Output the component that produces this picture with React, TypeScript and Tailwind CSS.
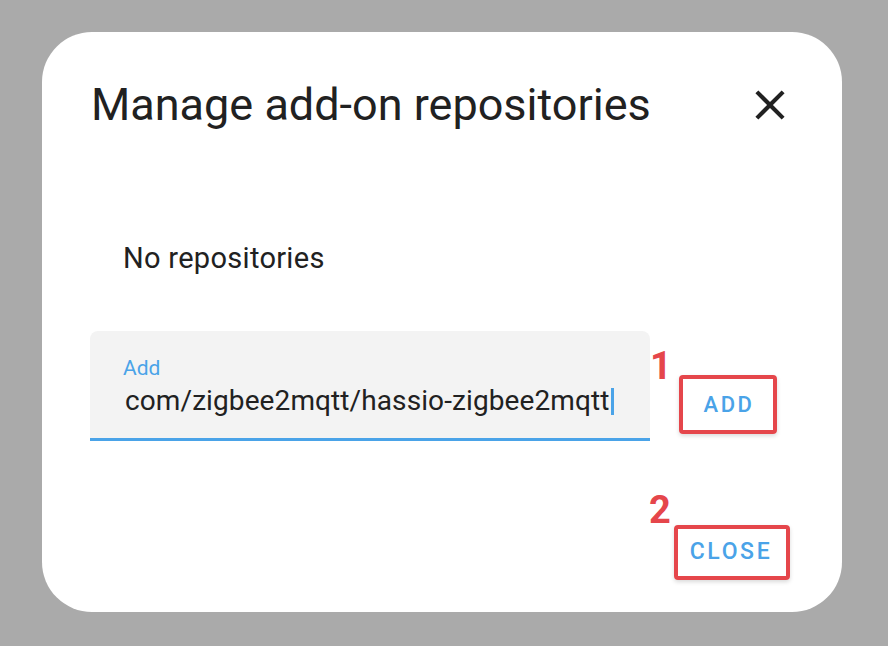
import React from "react";

export default function App() {
  return (
    <div
      className="w-[888px] h-[646px] bg-[#aaaaaa] pt-[32px] pl-[42px]"
      style={{ fontFamily: "Roboto, 'Noto Sans', sans-serif" }}
    >
      <div className="relative w-[800px] h-[580px] bg-white rounded-[50px] flex flex-col">
        <div className="flex items-center justify-between pl-[49px] pr-[47px] pt-[46px]">
          <h1 className="text-[45px] leading-[54px] text-[#212121] font-normal">Manage add-on repositories</h1>
          <svg width="50" height="50" viewBox="0 0 24 24" className="text-[#212121]">
            <path fill="currentColor" d="M19,6.41L17.59,5L12,10.59L6.41,5L5,6.41L10.59,12L5,17.59L6.41,19L12,13.41L17.59,19L19,17.59L13.41,12L19,6.41Z" />
          </svg>
        </div>
        <div className="pl-[81px] pt-[109px] text-[29px] leading-[34px] text-[#212121] tracking-[0.3px]">No repositories</div>
        <div className="flex items-start pl-[48px] pt-[56px]">
          <div className="relative w-[560px] h-[110px] bg-[#f3f3f3] rounded-t-[8px] border-b-[3px] border-[#4aa3e8]">
            <div className="absolute left-[33px] top-[26px] text-[21px] leading-[22px] text-[#4aa3e8]">Add</div>
            <div className="absolute left-[35px] top-[53px] text-[28px] leading-[34px] text-[#212121] tracking-[0.1px] flex items-center">
              com/zigbee2mqtt/hassio-zigbee2mqtt
              <span className="inline-block w-[3px] h-[27px] bg-[#4aa3e8] ml-[1px]"></span>
            </div>
          </div>
          <div className="relative ml-[29px] mt-[44px]">
            <span className="absolute left-[-29px] top-[-28px] text-[38px] font-bold leading-[38px] text-[#e5464b]">1</span>
            <div className="w-[98px] h-[59px] border-[4px] border-[#e5464b] rounded-[4px] flex items-center justify-center shadow-[0_2px_4px_rgba(0,0,0,0.15)]">
              <span className="text-[22px] font-medium tracking-[2.6px] text-[#4aa3e8] pl-[2px]">ADD</span>
            </div>
          </div>
        </div>
        <div className="flex justify-end pr-[52px] pt-[84px]">
          <div className="relative">
            <span className="absolute left-[-25px] top-[-34px] text-[38px] font-bold leading-[38px] text-[#e5464b]">2</span>
            <div className="w-[116px] h-[55px] border-[4px] border-[#e5464b] rounded-[4px] flex items-center justify-center shadow-[0_2px_4px_rgba(0,0,0,0.15)]">
              <span className="text-[23px] font-medium tracking-[2.6px] text-[#4aa3e8] pl-[2px] pr-[4px]">CLOSE</span>
            </div>
          </div>
        </div>
      </div>
    </div>
  );
}
